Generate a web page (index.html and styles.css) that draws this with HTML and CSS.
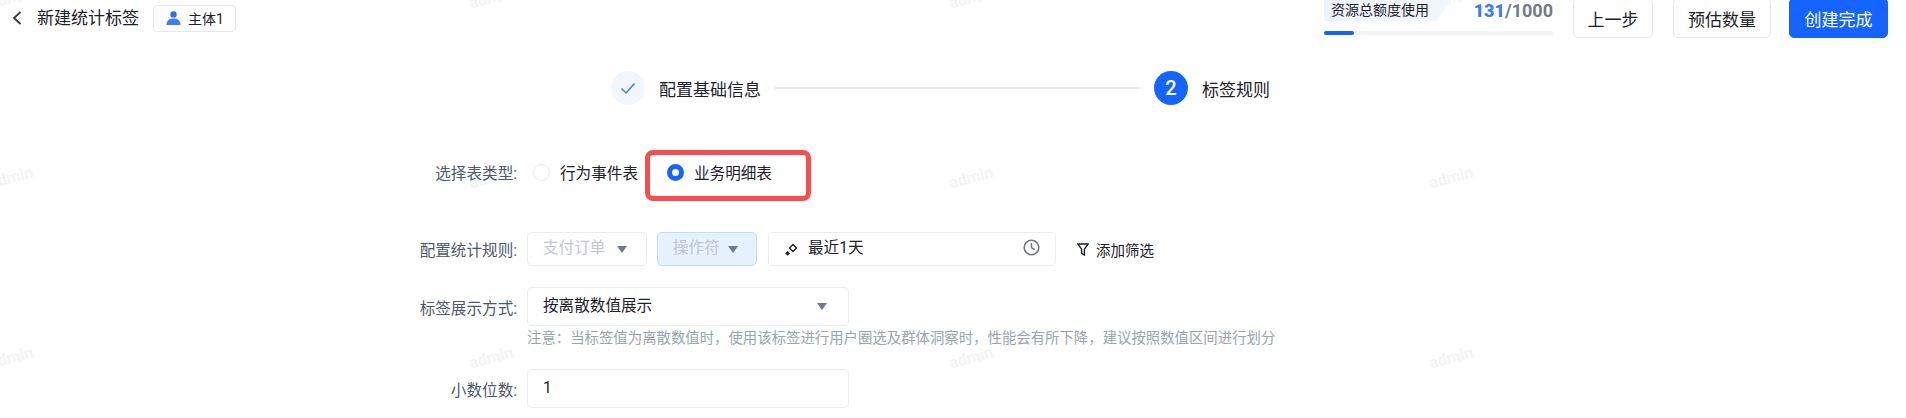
FILE: index.html
```html
<!DOCTYPE html>
<html lang="zh-CN">
<head>
    <meta charset="utf-8" />
    <title>新建统计标签</title>
    <link rel="stylesheet" href="styles.css">
</head>
<body>
    <div class="watermark">
        <div class="watermark-grid">
            <span>admin</span><span>admin</span><span>admin</span><span>admin</span>
            <span>admin</span><span>admin</span><span>admin</span><span>admin</span>
            <span>admin</span><span>admin</span><span>admin</span><span>admin</span>
        </div>
    </div>

    <header class="page-header">
        <svg class="back-icon" width="10" height="14" viewBox="0 0 10 14">
            <path d="M8.5 1 L2 7 L8.5 13" fill="none" stroke="#333a45" stroke-width="1.8" />
        </svg>
        <h1 class="page-title">新建统计标签</h1>
        <div class="subject-tag">
            <svg width="15" height="14" viewBox="0 0 15 14">
                <circle cx="7.5" cy="3.4" r="3.2" fill="#2f6fed" />
                <path d="M0.5 14 C0.5 9.5 3.5 7.6 7.5 7.6 C11.5 7.6 14.5 9.5 14.5 14 Z" fill="#3d7df5" />
            </svg>
            <span>主体1</span>
        </div>

        <div class="header-right">
            <div class="quota">
                <div class="quota-top">
                    <span class="quota-label">资源总额度使用</span>
                    <span class="quota-count"><b>131</b>/1000</span>
                </div>
                <div class="quota-track"><div class="quota-fill"></div></div>
            </div>
            <button class="btn">上一步</button>
            <button class="btn">预估数量</button>
            <button class="btn btn-primary">创建完成</button>
        </div>
    </header>

    <div class="steps">
        <span class="step-dot step-done">
            <svg width="16" height="13" viewBox="0 0 16 13">
                <path d="M1.5 6.5 L6 11 L14.5 1.5" fill="none" stroke="#3f7cf0" stroke-width="1.5" />
            </svg>
        </span>
        <span class="step-text">配置基础信息</span>
        <span class="step-line"></span>
        <span class="step-dot step-current">2</span>
        <span class="step-text">标签规则</span>
    </div>

    <div class="form">
        <div class="form-row row-type">
            <label class="form-label">选择表类型:</label>
            <span class="radio"></span>
            <span class="radio-text">行为事件表</span>
            <div class="highlight">
                <span class="radio radio-checked"></span>
                <span class="radio-text">业务明细表</span>
            </div>
        </div>

        <div class="form-row row-rule">
            <label class="form-label">配置统计规则:</label>
            <div class="field field-event"><span class="muted">支付订单</span><i class="caret"></i></div>
            <div class="field field-op"><span class="muted">操作符</span><i class="caret"></i></div>
            <div class="field field-date">
                <svg width="13" height="13" viewBox="0 0 13 13">
                    <path d="M8 1.5 L11.5 5 L8 8.5 L4.5 5 Z" fill="none" stroke="#1d2129" stroke-width="1.4" />
                    <path d="M2.6 8 L5 10.4 L2.6 12.8 L0.2 10.4 Z" fill="#1d2129" />
                </svg>
                <span class="date-text">最近1天</span>
                <svg class="clock" width="17" height="17" viewBox="0 0 17 17">
                    <circle cx="8.5" cy="8.5" r="7.3" fill="none" stroke="#737a87" stroke-width="1.6" />
                    <path d="M8.5 4 V8.8 L11.8 10.6" fill="none" stroke="#737a87" stroke-width="1.6" />
                </svg>
            </div>
            <div class="add-filter">
                <svg width="12" height="13" viewBox="0 0 12 13">
                    <path d="M0.8 1 H11.2 L7.4 6.2 V12 L4.6 10.4 V6.2 Z" fill="none" stroke="#1d2129" stroke-width="1.4" />
                </svg>
                <span>添加筛选</span>
            </div>
        </div>

        <div class="form-row row-display">
            <label class="form-label">标签展示方式:</label>
            <div class="field field-wide"><span>按离散数值展示</span><i class="caret"></i></div>
        </div>
        <p class="form-note">注意：当标签值为离散数值时，使用该标签进行用户圈选及群体洞察时，性能会有所下降，建议按照数值区间进行划分</p>

        <div class="form-row row-decimal">
            <label class="form-label">小数位数:</label>
            <div class="field field-wide"><span>1</span></div>
        </div>
    </div>
</body>
</html>
```

FILE: styles.css
```css
* {
    margin: 0;
    padding: 0;
    box-sizing: border-box;
}

html {
    height: 418px;
    overflow: hidden;
}

body {
    height: 418px;
    background: #fff;
    color: #1d2129;
    font-family: Roboto, "Noto Sans CJK SC", sans-serif;
    font-size: 16px;
}

.watermark {
    position: absolute;
    top: 0;
    left: 0;
    z-index: -1;
    width: 1906px;
    height: 418px;
    overflow: hidden;
    pointer-events: none;
}

.watermark-grid {
    display: grid;
    grid-template-columns: repeat(4, 480px);
    grid-auto-rows: 180px;
    margin: -93px 0 0 -229px;
}

.watermark span {
    display: flex;
    align-items: center;
    justify-content: center;
    color: #f4f4f5;
    font-size: 16px;
    font-weight: 700;
    transform: rotate(-15deg);
}

/* header */
.page-header {
    display: flex;
    align-items: center;
    height: 36px;
    padding: 0 18px 0 12px;
}

.back-icon {
    margin-right: 15px;
}

.page-title {
    font-size: 17px;
    font-weight: 400;
    line-height: 24px;
}

.subject-tag {
    display: flex;
    align-items: center;
    gap: 7px;
    height: 27px;
    margin-left: 14px;
    padding: 0 11px 0 12px;
    border: 1px solid #e5e7eb;
    border-radius: 4px;
    font-size: 14px;
}

.header-right {
    display: flex;
    align-items: center;
    margin-left: auto;
}

.quota {
    width: 229px;
    height: 36px;
}

.quota-top {
    display: flex;
    justify-content: space-between;
    height: 31px;
}

.quota-label {
    width: 127px;
    height: 21px;
    padding-left: 7px;
    background: linear-gradient(90deg, #edf3fd, #f2f6fe);
    clip-path: polygon(0 0, 100% 0, 88% 100%, 0 100%);
    font-size: 14px;
    line-height: 20px;
}

.quota-count {
    color: #737a87;
    font-size: 18px;
    font-weight: 700;
    line-height: 21px;
}

.quota-count b {
    color: #3f7cf0;
}

.quota-track {
    height: 4px;
    border-radius: 2px;
    background: #f2f4f7;
}

.quota-fill {
    width: 30px;
    height: 4px;
    border-radius: 2px;
    background: #1664ff;
}

.btn {
    width: 80px;
    height: 40px;
    margin-left: 20px;
    border: 1px solid #e5e7eb;
    border-radius: 5px;
    background: #fff;
    color: #1d2129;
    font-family: inherit;
    font-size: 17px;
}

.header-right .btn:nth-of-type(2) {
    width: 98px;
}

.btn-primary {
    width: 99px;
    margin-left: 18px;
    border-color: #1664ff;
    background: #1664ff;
    color: #fff;
}

/* steps */
.steps {
    display: flex;
    align-items: center;
    height: 34px;
    margin: 35px 0 0 611px;
}

.step-dot {
    display: flex;
    align-items: center;
    justify-content: center;
    width: 34px;
    height: 34px;
    border-radius: 50%;
}

.step-done {
    background: #f2f6fe;
}

.step-current {
    background: #1664ff;
    color: #fff;
    font-size: 20px;
    font-weight: 500;
}

.step-text {
    margin-left: 14px;
    font-size: 17px;
}

.step-line {
    width: 365px;
    height: 2px;
    margin: 0 14px;
    background: #e8ecf0;
}

/* form */
.form {
    margin: 45px 0 0 400px;
}

.form-row {
    display: flex;
    align-items: center;
}

.form-label {
    width: 117px;
    margin-right: 10px;
    color: #4e5969;
    font-size: 15.6px;
    text-align: right;
}

.row-type {
    height: 51px;
    padding-bottom: 7px;
}

.row-type .form-label {
    margin-right: 16px;
}

.radio {
    width: 17px;
    height: 17px;
    border: 1px solid #e8eaed;
    border-radius: 50%;
}

.radio-checked {
    border: 5px solid #1664ff;
}

.radio-text {
    margin-left: 10px;
    font-size: 15.6px;
}

.highlight {
    display: flex;
    align-items: center;
    width: 166px;
    height: 51px;
    margin: 0 0 -7px 7px;
    padding: 0 0 7px 17px;
    border: 5px solid #f84d4d;
    border-radius: 8px;
}

.row-rule {
    margin-top: 31px;
}

.field {
    display: flex;
    align-items: center;
    height: 34px;
    padding: 0 15px;
    border: 1px solid #eaecef;
    border-radius: 5px;
    background: #fff;
    font-size: 15.6px;
    line-height: 30px;
}

.field > span {
    margin-top: -2px;
}

.muted {
    color: #c2c6cc;
}

.caret {
    width: 0;
    height: 0;
    margin-left: auto;
    border-left: 5px solid transparent;
    border-right: 5px solid transparent;
    border-top: 7px solid #737a87;
}

.field-event {
    width: 120px;
    padding-right: 19px;
}

.field-op {
    width: 100px;
    margin-left: 10px;
    padding-right: 18px;
    border-color: #c0dcfb;
    background: #e6f2ff;
}

.field-date {
    width: 288px;
    margin-left: 11px;
    padding-left: 16px;
}

.field-date > span {
    margin-left: 10px;
}

.clock {
    margin-left: auto;
    margin-top: -3px;
}

.add-filter {
    display: flex;
    align-items: center;
    gap: 7px;
    margin: 0 0 0 21px;
    font-size: 14.5px;
}

.row-display {
    margin-top: 21px;
}

.field-wide {
    width: 322px;
    height: 39px;
    padding-right: 21px;
}

.form-note {
    height: 20px;
    margin: 3px 0 0 127px;
    color: #9aa3af;
    font-size: 14.4px;
    line-height: 20px;
    white-space: nowrap;
}

.row-decimal {
    margin-top: 20px;
}
```
